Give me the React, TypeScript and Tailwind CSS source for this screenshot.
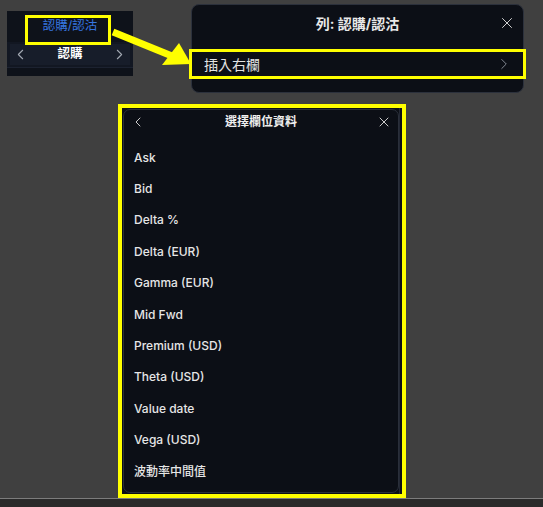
import { ChevronLeft, ChevronRight, X } from "lucide-react";

const fields = [
  "Ask",
  "Bid",
  "Delta %",
  "Delta (EUR)",
  "Gamma (EUR)",
  "Mid Fwd",
  "Premium (USD)",
  "Theta (USD)",
  "Value date",
  "Vega (USD)",
  "波動率中間值",
];

function HeaderCell() {
  return (
    <div className="relative mt-[7px] w-[126px] h-[65px] bg-[#0e121a] flex flex-col">
      <div className="h-[31px] flex items-center justify-center">
        <span className="text-[12.5px] text-[#3676e0]">認購/認沽</span>
      </div>
      <div className="h-[25px] bg-[#121722] px-[3px] py-[2px]">
        <div className="h-full bg-[#171d2a] flex items-center justify-between px-[2px]">
          <ChevronLeft className="w-[17px] h-[17px] text-[#a3a9b3]" strokeWidth={1.5} />
          <span className="text-[12.5px] font-bold text-white">認購</span>
          <ChevronRight className="w-[17px] h-[17px] text-[#a3a9b3]" strokeWidth={1.5} />
        </div>
      </div>
      <div className="flex-1 border-t border-[#1c2230]" />
      {/* highlight */}
      <div className="absolute left-[18px] top-[4px] w-[86px] h-[30px] border-[3px] border-[#ffff00]" />
    </div>
  );
}

function ColumnMenu() {
  return (
    <div className="ml-[58px] w-[333px] h-[89px] bg-[#0c0f16] border border-[#2c313c] rounded-[8px] flex flex-col">
      <div className="h-[36px] relative flex items-center justify-center">
        <span className="text-[14px] font-bold text-[#e8e8e8]">列: 認購/認沽</span>
        <X className="absolute right-[7px] w-[18px] h-[18px] text-[#d6d6d6]" strokeWidth={1.3} />
      </div>
      <div className="mt-[8px] -mx-[3px] h-[30px] border-[3px] border-[#ffff00] flex items-center justify-between pl-[12px] pr-[10px]">
        <span className="text-[14px] text-[#e4e4e4]">插入右欄</span>
        <ChevronRight className="w-[18px] h-[18px] text-[#8e949e]" strokeWidth={1.2} />
      </div>
    </div>
  );
}

function FieldPicker() {
  return (
    <div className="ml-[118px] mt-[11px] w-[288px] h-[394px] border-4 border-[#ffff00] bg-[#0c0f16] flex">
      <div className="flex-1 mt-[1px] mb-[1px] ml-[1px] border border-[#2a2f3a] rounded-[7px] flex flex-col">
        <div className="h-[24px] flex items-center justify-between pl-[6px] pr-[6px]">
          <ChevronLeft className="w-[16px] h-[16px] text-[#cccccc]" strokeWidth={1.5} />
          <span className="text-[12px] font-bold text-[#eeeeee]">選擇欄位資料</span>
          <X className="w-[16px] h-[16px] text-[#cccccc]" strokeWidth={1.5} />
        </div>
        <div className="pt-[8px] flex flex-col">
          {fields.map((f) => (
            <div key={f} className="h-[31.4px] flex items-center pl-[10px] text-[12px] font-medium text-[#e6e6e6]">
              {f}
            </div>
          ))}
        </div>
      </div>
      <div className="w-[3px] border-l border-[#232834]" />
    </div>
  );
}

export default function App() {
  return (
    <div
      className="relative w-[543px] h-[507px] overflow-hidden bg-[#404040] flex flex-col"
      style={{ fontFamily: 'Inter, "Noto Sans CJK TC", sans-serif' }}
    >
      <div className="flex items-start pl-[7px] pt-[4px]">
        <HeaderCell />
        <ColumnMenu />
      </div>
      <FieldPicker />
      <div className="mt-auto h-[9px] border-t border-[#7c7c7c] bg-[#2a2a2a]" />

      {/* arrow pointing from the header cell to the menu item */}
      <svg className="absolute left-0 top-0" width="543" height="507" viewBox="0 0 543 507">
        <line x1="113" y1="32" x2="172" y2="56" stroke="#ffff00" strokeWidth="7" />
        <polygon points="191,64 162,65 179,43" fill="#ffff00" />
      </svg>
    </div>
  );
}
